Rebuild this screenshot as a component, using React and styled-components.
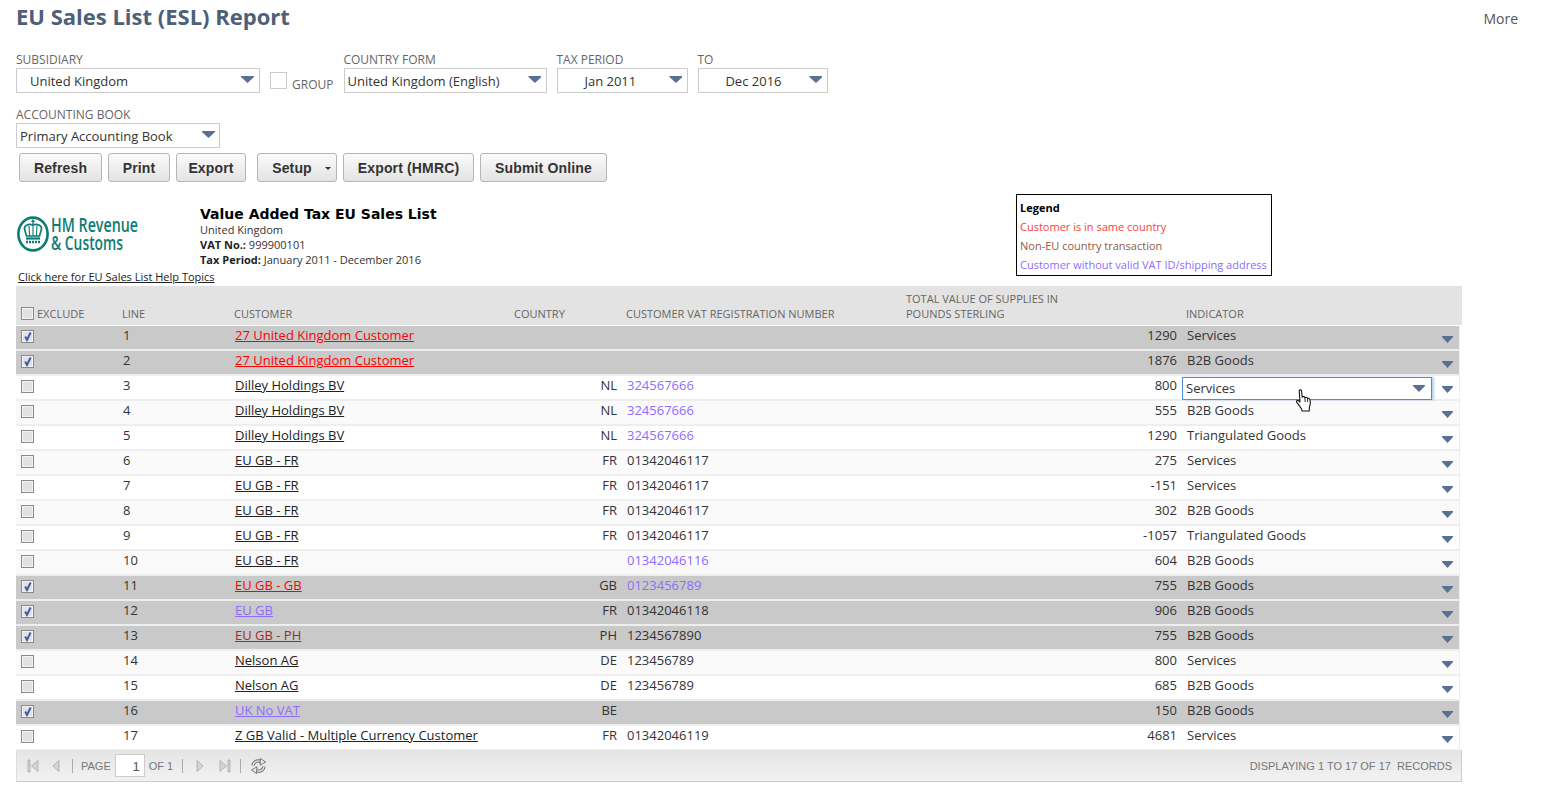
import React from 'react';
import styled, { createGlobalStyle } from 'styled-components';

const GlobalStyle = createGlobalStyle`
  html, body { margin: 0; padding: 0; background: #fff; }
  body { font-family: "Open Sans", "Liberation Sans", sans-serif; font-size: 13px; color: #222; }
`;

const Page = styled.div`
  width: 1546px;
  height: 794px;
  overflow: hidden;
  padding-left: 16px;
  box-sizing: border-box;
`;

const TitleBar = styled.div`
  display: flex;
  justify-content: space-between;
  height: 53px;
  padding-right: 28px;
`;

const Title = styled.h1`
  margin: 0;
  font-size: 22px;
  line-height: 33px;
  font-weight: 700;
  color: #4d5f79;
`;

const More = styled.span`
  font-size: 14px;
  line-height: 38px;
  color: #555;
`;

const FilterRow = styled.div`
  display: flex;
  align-items: flex-start;
  gap: 10px;
  height: 55px;
`;

const Field = styled.div`
  display: flex;
  flex-direction: column;
  width: ${(p) => p.$w}px;
`;

const Label = styled.label`
  margin: -1px 0 1px ${(p) => p.$ml || 0}px;
  font-size: 12px;
  line-height: 15px;
  color: #666;
  text-transform: uppercase;
`;

const Arrow = styled.span`
  display: block;
  flex: none;
  width: ${(p) => p.$w || 13}px;
  height: 7px;
  background: #5a6f94;
  clip-path: polygon(0 0, 100% 0, 100% 15%, 50% 100%, 0 15%);
`;

const Select = styled.div`
  display: flex;
  align-items: center;
  justify-content: space-between;
  height: 25px;
  box-sizing: border-box;
  border: 1px solid #ccc;
  padding: 0 ${(p) => p.$pr || 5}px 0 ${(p) => p.$pl || 3}px;
  font-size: 13px;
  color: #333;
  ${Arrow} { margin-bottom: 2px; }
`;

const GroupBox = styled.div`
  display: flex;
  align-items: flex-start;
  gap: 5px;
  padding-top: 19px;
`;

const EmptyBox = styled.span`
  width: 15px;
  height: 15px;
  border: 1px solid #ccc;
`;

const GroupLabel = styled.span`
  font-size: 12px;
  line-height: 16px;
  margin: 5px 1px 0 0;
  color: #666;
`;

const Buttons = styled.div`
  display: flex;
  gap: 6px;
  padding-left: 3px;
  margin-top: -10px;
`;

const Button = styled.button`
  display: flex;
  align-items: center;
  justify-content: center;
  width: ${(p) => p.$w}px;
  height: 29px;
  margin-right: ${(p) => p.$mr || 0}px;
  padding: 0 ${(p) => p.$pr || 0}px 0 0;
  box-sizing: border-box;
  border: 1px solid #b5b5b5;
  border-radius: 3px;
  background: linear-gradient(#fafafa, #e3e3e3);
  font-family: "Liberation Sans", Arial, sans-serif;
  font-size: 14px;
  font-weight: 700;
  letter-spacing: 0.15px;
  color: #333;
  position: relative;
`;

const Caret = styled.span`
  position: absolute;
  right: 5px;
  top: 13px;
  width: 0;
  height: 0;
  border-left: 3px solid transparent;
  border-right: 3px solid transparent;
  border-top: 3px solid #333;
`;

const ReportHead = styled.div`
  display: grid;
  grid-template-columns: 184px 816px 256px;
  height: 104px;
`;

const LogoCol = styled.div`
  padding-top: 31px;
`;

const InfoCol = styled.div`
  padding-top: 24px;
`;

const ReportTitle = styled.div`
  font-family: "DejaVu Sans", Verdana, sans-serif;
  font-size: 14px;
  font-weight: 700;
  line-height: 16px;
  color: #000;
`;

const InfoLine = styled.div`
  font-size: 11px;
  line-height: 15px;
  color: #333;
  b { font-weight: 700; color: #222; }
`;

const Legend = styled.div`
  margin-top: 12px;
  height: 82px;
  box-sizing: border-box;
  border: 1px solid #000;
  padding: 3px 3px;
  font-size: 11px;
  line-height: 19px;
`;

const LegendItem = styled.div`
  color: ${(p) => p.$c};
  font-weight: ${(p) => (p.$bold ? 700 : 400)};
`;

const HelpLink = styled.a`
  grid-column: 1 / span 2;
  margin: -10px 0 0 2px;
  font-size: 11px;
  line-height: 15px;
  color: #222;
  text-decoration: underline;
`;

const columns = '107px 112px 279px 113px 279px 281px 250px 22px';

const HeadRow = styled.div`
  display: grid;
  grid-template-columns: ${columns} 3px;
  align-items: end;
  width: 1446px;
  height: 39px;
  box-sizing: border-box;
  padding-bottom: 4px;
  margin-bottom: 1px;
  background: #e3e3e3;
`;

const HeadCell = styled.div`
  margin-left: ${(p) => p.$ml ?? -1}px;
  font-size: 11px;
  line-height: 15px;
  color: #666;
  text-transform: uppercase;
  white-space: nowrap;
`;

const ExcludeHead = styled(HeadCell)`
  display: flex;
  align-items: center;
  gap: 3px;
`;

const Row = styled.div`
  display: grid;
  grid-template-columns: ${columns};
  width: 1444px;
  height: 25px;
  box-sizing: border-box;
  border-bottom: 2px solid #eeeeee;
  border-right: 1px solid #eeeeee;
  background: ${(p) => (p.$excluded ? '#c9c9c9' : p.$alt ? '#fafafa' : '#fff')};
  line-height: 19px;
  font-size: 13px;
  color: #333;
`;

const CheckCell = styled.div`
  padding: 4px 0 0 5px;
`;

const Box = styled.span`
  display: block;
  width: 13px;
  height: 13px;
  box-sizing: border-box;
  border: 1px solid #8a8a8a;
  box-shadow: inset 0 0 0 1px #f4f4f4;
  background: #e2e2e2;
  position: relative;
  svg { position: absolute; left: 1px; top: 0; }
`;

const CustomerLink = styled.a`
  color: ${(p) => p.$c || '#222'};
  text-decoration: underline;
`;

const CountryCell = styled.div`
  text-align: right;
  padding-right: 10px;
`;

const VatCell = styled.div`
  color: ${(p) => p.$c || '#333'};
`;

const TotalCell = styled.div`
  text-align: right;
  padding-right: 10px;
`;

const ArrowCell = styled.div`
  padding: 10px 0 0 5px;
`;

const FocusSelect = styled.div`
  position: relative;
  display: flex;
  align-items: center;
  justify-content: space-between;
  margin: 1px 5px 0 -5px;
  height: 23px;
  box-sizing: border-box;
  border: 1px solid #4a90d9;
  box-shadow: 2px 0 2px rgba(74, 144, 217, 0.4);
  padding: 0 6px 0 3px;
  background: #fff;
`;

const Pointer = styled.span`
  position: absolute;
  left: 113px;
  top: 11px;
  display: block;
  line-height: 0;
`;

const Footer = styled.div`
  display: flex;
  align-items: center;
  width: 1446px;
  height: 32px;
  box-sizing: border-box;
  margin-top: -1px;
  padding: 0 9px 0 10px;
  border-bottom: 1px solid #ccc;
  border-right: 1px solid #ccc;
  border-left: 1px solid #ddd;
  background: linear-gradient(#e4e4e4, #f2f2f2);
  font-family: "Liberation Sans", Arial, sans-serif;
  font-size: 11px;
  color: #777;
`;

const Sep = styled.span`
  width: 1px;
  height: 14px;
  margin: 0 ${(p) => p.$r}px 0 ${(p) => p.$l}px;
  background: #aaa;
`;

const PageInput = styled.div`
  width: 30px;
  height: 23px;
  margin: 0 4px;
  box-sizing: border-box;
  border: 1px solid #ccc;
  background: #fff;
  text-align: right;
  padding-right: 4px;
  font-size: 13px;
  line-height: 23px;
  color: #555;
`;

const FooterSpacer = styled.div`
  flex: 1;
`;

const NavIcon = styled.svg`
  margin-left: ${(p) => p.$l || 0}px;
  transform: ${(p) => (p.$flip ? 'scaleX(-1)' : 'none')};
`;

const RED = '#ff0000';
const BROWN = '#a52a2a';
const PURPLE = '#8e6cff';

const rows = [
  { n: 1, name: '27 United Kingdom Customer', nc: RED, total: 1290, ind: 'Services', ex: true },
  { n: 2, name: '27 United Kingdom Customer', nc: RED, total: 1876, ind: 'B2B Goods', ex: true },
  { n: 3, name: 'Dilley Holdings BV', cc: 'NL', vat: '324567666', vc: PURPLE, total: 800, ind: 'Services', focus: true },
  { n: 4, name: 'Dilley Holdings BV', cc: 'NL', vat: '324567666', vc: PURPLE, total: 555, ind: 'B2B Goods' },
  { n: 5, name: 'Dilley Holdings BV', cc: 'NL', vat: '324567666', vc: PURPLE, total: 1290, ind: 'Triangulated Goods' },
  { n: 6, name: 'EU GB - FR', cc: 'FR', vat: '01342046117', total: 275, ind: 'Services' },
  { n: 7, name: 'EU GB - FR', cc: 'FR', vat: '01342046117', total: -151, ind: 'Services' },
  { n: 8, name: 'EU GB - FR', cc: 'FR', vat: '01342046117', total: 302, ind: 'B2B Goods' },
  { n: 9, name: 'EU GB - FR', cc: 'FR', vat: '01342046117', total: -1057, ind: 'Triangulated Goods' },
  { n: 10, name: 'EU GB - FR', vat: '01342046116', vc: PURPLE, total: 604, ind: 'B2B Goods' },
  { n: 11, name: 'EU GB - GB', nc: RED, cc: 'GB', vat: '0123456789', vc: PURPLE, total: 755, ind: 'B2B Goods', ex: true },
  { n: 12, name: 'EU GB', nc: PURPLE, cc: 'FR', vat: '01342046118', total: 906, ind: 'B2B Goods', ex: true },
  { n: 13, name: 'EU GB - PH', nc: BROWN, cc: 'PH', vat: '1234567890', total: 755, ind: 'B2B Goods', ex: true },
  { n: 14, name: 'Nelson AG', cc: 'DE', vat: '123456789', total: 800, ind: 'Services' },
  { n: 15, name: 'Nelson AG', cc: 'DE', vat: '123456789', total: 685, ind: 'B2B Goods' },
  { n: 16, name: 'UK No VAT', nc: PURPLE, cc: 'BE', total: 150, ind: 'B2B Goods', ex: true },
  { n: 17, name: 'Z GB Valid - Multiple Currency Customer', cc: 'FR', vat: '01342046119', total: 4681, ind: 'Services' },
];

const Check = ({ checked }) => (
  <Box>
    {checked && (
      <svg width="10" height="11" viewBox="0 0 10 11">
        <path d="M2.2 5.5 L4 9 L7.6 1.5" fill="none" stroke="#3b5aa8" strokeWidth="1.9" />
      </svg>
    )}
  </Box>
);

const Logo = () => (
  <svg width="124" height="42" viewBox="0 0 124 42">
    <ellipse cx="17" cy="21" rx="14.6" ry="16.4" fill="none" stroke="#0e7c73" strokeWidth="2.6" />
    <path d="M17 6.5 V11 M15.4 8.2 H18.6" stroke="#0e7c73" strokeWidth="1.4" />
    <path d="M8.5 16 C8 12 13 10.5 17 12 C21 10.5 26 12 25.5 16 L23.5 23 H10.5 Z" fill="none" stroke="#0e7c73" strokeWidth="1.7" />
    <path d="M17 12 V23 M13 12.5 L13.6 23 M21 12.5 L20.4 23" stroke="#0e7c73" strokeWidth="1.1" />
    <path d="M10 25.5 H24" stroke="#0e7c73" strokeWidth="2.2" />
    <path d="M10 29 H24" stroke="#0e7c73" strokeWidth="2.4" strokeDasharray="2 1" />
    <text transform="translate(35 19) scale(1 1.35)" fontFamily="Open Sans, sans-serif" fontWeight="600" fontSize="14" fill="#0e7c73" textLength="87" lengthAdjust="spacingAndGlyphs">HM Revenue</text>
    <text transform="translate(35 37) scale(1 1.35)" fontFamily="Open Sans, sans-serif" fontWeight="600" fontSize="14" fill="#0e7c73" textLength="72" lengthAdjust="spacingAndGlyphs">&amp; Customs</text>
  </svg>
);

const NavEnd = ({ flip, left }) => (
  <NavIcon $flip={flip} $l={left} width="12" height="14" viewBox="0 0 12 14">
    <path d="M1 1 H3 V13 H1 Z" fill="#d4d4d4" stroke="#aaa" strokeWidth="0.8" />
    <path d="M11 1.5 V12.5 L4.5 7 Z" fill="#d4d4d4" stroke="#aaa" strokeWidth="0.8" />
  </NavIcon>
);

const NavStep = ({ flip, left }) => (
  <NavIcon $flip={flip} $l={left} width="8" height="14" viewBox="0 0 8 14">
    <path d="M7 1.5 V12.5 L1 7 Z" fill="#d4d4d4" stroke="#aaa" strokeWidth="0.8" />
  </NavIcon>
);

const Reload = () => (
  <svg width="15" height="16" viewBox="0 0 15 16">
    <g fill="none" strokeLinecap="butt">
      <path d="M2 7.5 C2.5 3.5 7 1.5 11 4" stroke="#666" strokeWidth="3.2" />
      <path d="M2 7.5 C2.5 3.5 7 1.5 11 4" stroke="#ededed" strokeWidth="1.4" />
      <path d="M13 8.5 C12.5 12.5 8 14.5 4 12" stroke="#666" strokeWidth="3.2" />
      <path d="M13 8.5 C12.5 12.5 8 14.5 4 12" stroke="#ededed" strokeWidth="1.4" />
    </g>
    <path d="M9.5 0.5 L14.5 4 L9 7.2 Z" fill="#ededed" stroke="#666" strokeWidth="0.9" />
    <path d="M5.5 15.5 L0.5 12 L6 8.8 Z" fill="#ededed" stroke="#666" strokeWidth="0.9" />
  </svg>
);

const Hand = () => (
  <svg width="17" height="23" viewBox="0 0 17 23">
    <path
      d="M3.2 2 C3.2 0.6 5.4 0.5 5.6 2 L6.2 8.2 C7 7.2 8.6 7.4 8.9 8.7 C9.7 7.9 11.2 8.2 11.5 9.5 C12.4 9 13.8 9.5 14 10.8 C14.5 13.5 14.4 16 13.4 18.4 L13.2 22 H6 L5.6 20 C4 17.5 2.4 15.4 0.8 13.4 C0 12.2 1.2 11 2.4 11.6 L4 13 Z"
      fill="#fff"
      stroke="#111"
      strokeWidth="1.1"
      strokeLinejoin="round"
    />
    <path d="M8.9 8.7 L9.2 13 M11.5 9.5 L11.6 13" stroke="#111" strokeWidth="0.9" fill="none" />
  </svg>
);

export default function App() {
  return (
    <Page>
      <GlobalStyle />
      <TitleBar>
        <Title>EU Sales List (ESL) Report</Title>
        <More>More</More>
      </TitleBar>

      <FilterRow>
        <Field $w={244}>
          <Label>Subsidiary</Label>
          <Select $pl={13}>United Kingdom<Arrow /></Select>
        </Field>
        <GroupBox>
          <EmptyBox />
          <GroupLabel>GROUP</GroupLabel>
        </GroupBox>
        <Field $w={203}>
          <Label $ml={-1}>Country Form</Label>
          <Select $pl={2}>United Kingdom (English)<Arrow /></Select>
        </Field>
        <Field $w={131}>
          <Label $ml={-1}>Tax Period</Label>
          <Select $pl={26}>Jan 2011<Arrow /></Select>
        </Field>
        <Field $w={130}>
          <Label $ml={-1}>To</Label>
          <Select $pl={26}>Dec 2016<Arrow /></Select>
        </Field>
      </FilterRow>

      <FilterRow>
        <Field $w={204}>
          <Label>Accounting Book</Label>
          <Select $pr={4}>Primary Accounting Book<Arrow /></Select>
        </Field>
      </FilterRow>

      <Buttons>
        <Button $w={83}>Refresh</Button>
        <Button $w={62}>Print</Button>
        <Button $w={70} $mr={5}>Export</Button>
        <Button $w={80} $pr={10}>Setup<Caret /></Button>
        <Button $w={131}>Export (HMRC)</Button>
        <Button $w={127}>Submit Online</Button>
      </Buttons>

      <ReportHead>
        <LogoCol><Logo /></LogoCol>
        <InfoCol>
          <ReportTitle>Value Added Tax EU Sales List</ReportTitle>
          <InfoLine>United Kingdom</InfoLine>
          <InfoLine><b>VAT No.:</b> 999900101</InfoLine>
          <InfoLine><b>Tax Period:</b> January 2011 - December 2016</InfoLine>
        </InfoCol>
        <Legend>
          <LegendItem $c="#000" $bold>Legend</LegendItem>
          <LegendItem $c="#ff3b3b">Customer is in same country</LegendItem>
          <LegendItem $c="#8f5a48">Non-EU country transaction</LegendItem>
          <LegendItem $c="#8e6cff">Customer without valid VAT ID/shipping address</LegendItem>
        </Legend>
        <HelpLink>Click here for EU Sales List Help Topics</HelpLink>
      </ReportHead>

      <HeadRow>
        <ExcludeHead $ml={5}><Check />Exclude</ExcludeHead>
        <HeadCell>Line</HeadCell>
        <HeadCell>Customer</HeadCell>
        <HeadCell $ml={0}>Country</HeadCell>
        <HeadCell>Customer VAT Registration Number</HeadCell>
        <HeadCell $ml={0}>Total Value of Supplies in<br />Pounds Sterling</HeadCell>
        <HeadCell>Indicator</HeadCell>
      </HeadRow>

      {rows.map((r, i) => (
        <Row key={r.n} $excluded={r.ex} $alt={i % 2 === 1}>
          <CheckCell><Check checked={r.ex} /></CheckCell>
          <div>{r.n}</div>
          <div><CustomerLink $c={r.nc}>{r.name}</CustomerLink></div>
          <CountryCell>{r.cc}</CountryCell>
          <VatCell $c={r.vc}>{r.vat}</VatCell>
          <TotalCell>{r.total}</TotalCell>
          {r.focus ? (
            <FocusSelect>
              {r.ind}
              <Arrow $w={12} />
              <Pointer><Hand /></Pointer>
            </FocusSelect>
          ) : (
            <div>{r.ind}</div>
          )}
          <ArrowCell><Arrow $w={11} /></ArrowCell>
        </Row>
      ))}

      <Footer>
        <NavEnd />
        <NavStep left={13} />
        <Sep $l={12} $r={8} />
        PAGE
        <PageInput>1</PageInput>
        OF 1
        <Sep $l={9} $r={13} />
        <NavStep flip />
        <NavEnd flip left={15} />
        <Sep $l={9} $r={10} />
        <Reload />
        <FooterSpacer />
        DISPLAYING 1 TO 17 OF 17&nbsp; RECORDS
      </Footer>
    </Page>
  );
}
